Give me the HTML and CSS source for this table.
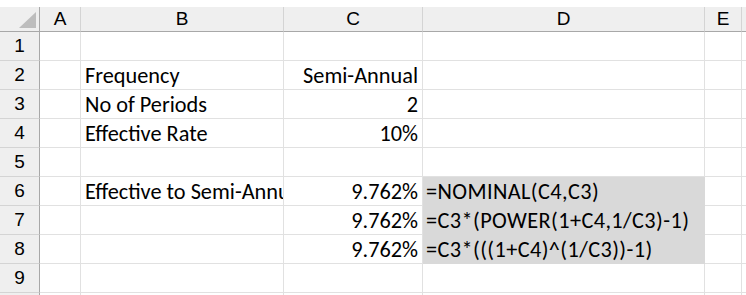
FILE: index.html
```html
<!DOCTYPE html>
<html lang="en">
<head>
  <meta charset="UTF-8" />
  <title>Nominal Rate</title>
  <link rel="stylesheet" href="styles.css">
</head>
<body>
  <div class="sheet" id="sheet"></div>

  <script>
    const cols = ['A', 'B', 'C', 'D', 'E', ''];
    const rowCount = 10;

    // cell values: [row][col] = { v, align, fill }
    const cells = {
      2: { B: { v: 'Frequency' }, C: { v: 'Semi-Annual', align: 'right' } },
      3: { B: { v: 'No of Periods' }, C: { v: '2', align: 'right' } },
      4: { B: { v: 'Effective Rate' }, C: { v: '10%', align: 'right' } },
      6: { B: { v: 'Effective to Semi-Annual' }, C: { v: '9.762%', align: 'right' }, D: { v: '=NOMINAL(C4,C3)', fill: true } },
      7: { C: { v: '9.762%', align: 'right' }, D: { v: '=C3*(POWER(1+C4,1/C3)-1)', fill: true } },
      8: { C: { v: '9.762%', align: 'right' }, D: { v: '=C3*(((1+C4)^(1/C3))-1)', fill: true } }
    };

    const sheet = document.getElementById('sheet');

    function addDiv(cls, text) {
      const d = document.createElement('div');
      d.className = cls;
      if (text) d.textContent = text;
      sheet.appendChild(d);
      return d;
    }

    // header row
    addDiv('corner');
    cols.forEach(c => addDiv('col-head', c));

    // body rows (last one only peeks in at the bottom edge, no label)
    for (let r = 1; r <= rowCount; r++) {
      addDiv('row-head', r < rowCount ? String(r) : '');
      cols.forEach(c => {
        const cell = (cells[r] || {})[c];
        let cls = 'cell';
        if (cell && cell.align === 'right') cls += ' right';
        if (cell && cell.fill) cls += ' fill';
        addDiv(cls, cell ? cell.v : '');
      });
    }
  </script>
</body>
</html>
```

FILE: styles.css
```css
:root {
  --grid: #e1e1e1;
  --head-bg: #efefef;
  --head-line: #d4d4d4;
  --head-edge: #a8a8a8;
  --fill: #d9d9d9;
}

body {
  margin: 0;
  background: #fff;
  height: 295px;
  overflow: hidden;
}

.sheet {
  display: grid;
  grid-template-columns: 40px 41px 203px 139px 282px 37px 1fr;
  grid-template-rows: 25px;
  grid-auto-rows: 29px;
  margin-top: 7px;
  font-family: "Carlito", "Lato", sans-serif;
  font-size: 22.3px;
  color: #000;
}

.corner,
.col-head,
.row-head {
  background: var(--head-bg);
  font-family: "Liberation Sans", Arial, sans-serif;
  font-size: 19px;
  display: flex;
  justify-content: center;
  align-items: flex-end;
  box-sizing: border-box;
}

.corner {
  position: relative;
  border-right: 1px solid var(--head-edge);
  border-bottom: 1px solid var(--head-edge);
}

/* select-all triangle */
.corner::after {
  content: "";
  position: absolute;
  right: 3px;
  bottom: 3px;
  border-style: solid;
  border-width: 0 0 16px 17px;
  border-color: transparent transparent #bdbdbd transparent;
}

.col-head {
  border-right: 1px solid var(--head-line);
  border-bottom: 1px solid var(--head-edge);
  padding-bottom: 3px;
  line-height: 1;
}

.row-head {
  border-right: 1px solid var(--head-edge);
  border-bottom: 1px solid var(--head-line);
  padding-bottom: 5px;
  line-height: 1;
}

.cell {
  border-right: 1px solid var(--grid);
  border-bottom: 1px solid var(--grid);
  box-sizing: border-box;
  display: flex;
  align-items: flex-end;
  padding: 0 4px 2px 4px;
  line-height: 1;
  white-space: nowrap;
  overflow: hidden;
}

.cell.right {
  justify-content: flex-end;
}

/* formula text cells */
.cell.fill {
  background: var(--fill);
  border-color: var(--fill);
  padding-left: 3px;
  letter-spacing: 0.4px;
}
```
